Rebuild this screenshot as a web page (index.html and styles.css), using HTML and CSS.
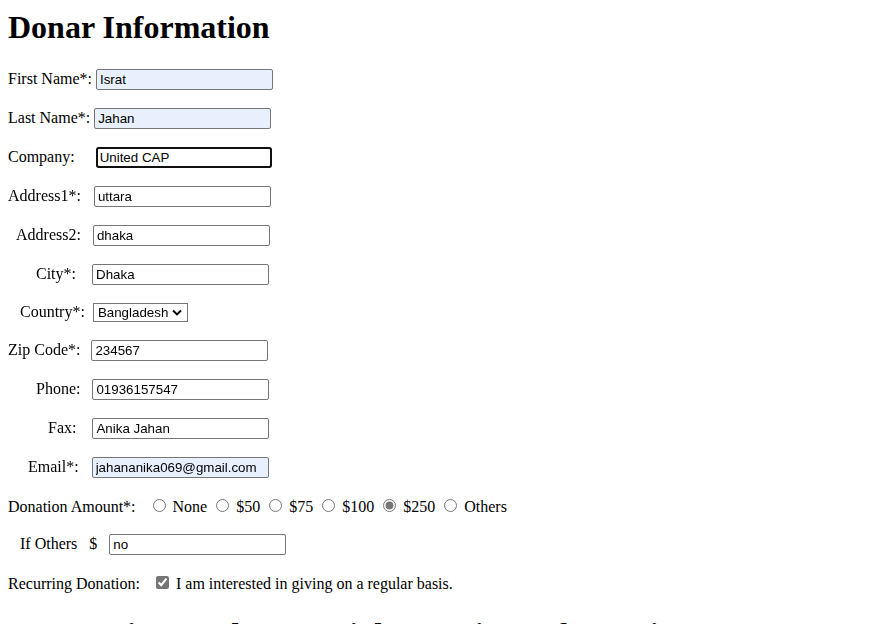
FILE: index.html
```html
<!DOCTYPE html>
<html lang="en">
<head>
<meta charset="utf-8">
<title>Donar Information</title>
<link rel="stylesheet" href="styles.css">
</head>
<body>
<h1 class="title first">Donar Information</h1>
<form class="donor">
  <p class="row"><label class="lbl gap-4" for="fn">First Name*:</label><input id="fn" class="field autofill" type="text" value="Israt"></p>
  <p class="row"><label class="lbl gap-4" for="ln">Last Name*:</label><input id="ln" class="field autofill" type="text" value="Jahan"></p>
  <p class="row"><label class="lbl gap-21" for="co">Company:</label><input id="co" class="field focused" type="text" value="United CAP" autofocus></p>
  <p class="row"><label class="lbl gap-13" for="a1">Address1*:</label><input id="a1" class="field" type="text" value="uttara"></p>
  <p class="row"><label class="lbl ind-8 gap-12" for="a2">Address2:</label><input id="a2" class="field" type="text" value="dhaka"></p>
  <p class="row"><label class="lbl ind-28 gap-16" for="ci">City*:</label><input id="ci" class="field" type="text" value="Dhaka"></p>
  <p class="row"><label class="lbl ind-12 gap-8" for="cn">Country*:</label><select id="cn" class="picker">
      <option>India</option>
      <option selected>Bangladesh</option>
      <option>Nepal</option>
    </select></p>
  <p class="row"><label class="lbl gap-11" for="zc">Zip Code*:</label><input id="zc" class="field" type="text" value="234567"></p>
  <p class="row"><label class="lbl ind-28 gap-12" for="ph">Phone:</label><input id="ph" class="field" type="text" value="01936157547"></p>
  <p class="row"><label class="lbl ind-40 gap-16" for="fx">Fax:</label><input id="fx" class="field" type="text" value="Anika Jahan"></p>
  <p class="row"><label class="lbl ind-20 gap-13" for="em">Email*:</label><input id="em" class="field autofill" type="email" value="jahananika069@gmail.com"></p>
  <p class="row"><span class="lbl gap-8">Donation Amount*:</span> <input class="choice" type="radio" name="amt" id="r0"> <label for="r0">None</label> <input class="choice" type="radio" name="amt" id="r1"> <label for="r1">$50</label> <input class="choice" type="radio" name="amt" id="r2"> <label for="r2">$75</label> <input class="choice" type="radio" name="amt" id="r3"> <label for="r3">$100</label> <input class="choice" type="radio" name="amt" id="r4" checked> <label for="r4">$250</label> <input class="choice" type="radio" name="amt" id="r5"> <label for="r5">Others</label></p>
  <p class="row"><label class="lbl ind-12 gap-12" for="ot">If Others</label><span class="dollar">$</span><input id="ot" class="field" type="text" value="no"></p>
  <p class="row"><span class="lbl gap-12">Recurring Donation:</span><input class="choice" type="checkbox" id="rec" checked> <label for="rec">I am interested in giving on a regular basis.</label></p>
</form>
<h1 class="title">Honorarium and Memorial Donation Information</h1>
</body>
</html>
```
FILE: styles.css
```css
html {
  background: #ffffff;
}
body {
  margin: 8px;
  font-family: "Liberation Serif", "Times New Roman", serif;
  font-size: 16px;
  color: #000000;
}
.title {
  font-size: 32px;
  font-weight: bold;
  margin: 21.44px 0;
}
.title.first {
  margin-top: 1px;
  margin-bottom: 22.44px;
}
.donor {
  margin: 0;
}
.row {
  margin: 16px 0;
  padding: 1px 0;
}
.lbl {
  display: inline;
}
.ind-8 { margin-left: 8px; }
.ind-12 { margin-left: 12px; }
.ind-20 { margin-left: 20px; }
.ind-28 { margin-left: 28px; }
.ind-40 { margin-left: 40px; }
.gap-4 { margin-right: 4px; }
.gap-8 { margin-right: 8px; }
.gap-11 { margin-right: 11px; }
.gap-12 { margin-right: 12px; }
.gap-13 { margin-right: 13px; }
.gap-16 { margin-right: 16px; }
.gap-21 { margin-right: 21px; }
.dollar {
  margin-right: 12px;
}
.field {
  box-sizing: border-box;
  width: 177px;
  height: 21px;
  padding: 1px 3px;
  border: 1px solid #767676;
  border-radius: 2px;
  background-color: #ffffff;
  font-family: "Liberation Sans", Arial, sans-serif;
  font-size: 13.333px;
  color: #000000;
  margin: 0;
}
.field.autofill {
  background-color: #e8f0fe;
}
.field.focused {
  width: 176px;
  outline: 2px solid #101010;
  outline-offset: -2px;
  border-radius: 3px;
  caret-color: #000000;
}
.picker {
  -webkit-appearance: none;
  appearance: none;
  box-sizing: border-box;
  width: 95px;
  height: 19px;
  padding: 0 12px 0 4px;
  border: 1px solid #767676;
  border-radius: 0;
  background-color: #ffffff;
  background-image: url("data:image/svg+xml,%3Csvg xmlns='http://www.w3.org/2000/svg' width='10' height='7' viewBox='0 0 10 7'%3E%3Cpath d='M1 1.5l4 4 4-4' fill='none' stroke='%23000' stroke-width='1.9'/%3E%3C/svg%3E");
  background-repeat: no-repeat;
  background-position: right 5px center;
  font-family: "Liberation Sans", Arial, sans-serif;
  font-size: 13.333px;
  color: #000000;
  margin: 0;
}
.choice {
  accent-color: #767676;
}
```
